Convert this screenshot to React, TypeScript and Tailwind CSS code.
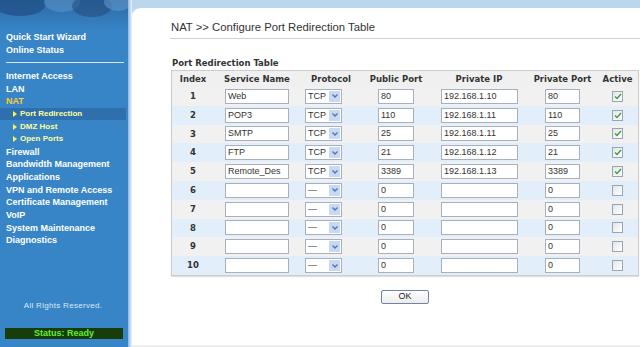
import React from "react";

type Row = { i: number; name: string; proto: string; pub: string; ip: string; priv: string; active: boolean };

const rows: Row[] = [
  { i: 1, name: "Web", proto: "TCP", pub: "80", ip: "192.168.1.10", priv: "80", active: true },
  { i: 2, name: "POP3", proto: "TCP", pub: "110", ip: "192.168.1.11", priv: "110", active: true },
  { i: 3, name: "SMTP", proto: "TCP", pub: "25", ip: "192.168.1.11", priv: "25", active: true },
  { i: 4, name: "FTP", proto: "TCP", pub: "21", ip: "192.168.1.12", priv: "21", active: true },
  { i: 5, name: "Remote_Des", proto: "TCP", pub: "3389", ip: "192.168.1.13", priv: "3389", active: true },
  { i: 6, name: "", proto: "—", pub: "0", ip: "", priv: "0", active: false },
  { i: 7, name: "", proto: "—", pub: "0", ip: "", priv: "0", active: false },
  { i: 8, name: "", proto: "—", pub: "0", ip: "", priv: "0", active: false },
  { i: 9, name: "", proto: "—", pub: "0", ip: "", priv: "0", active: false },
  { i: 10, name: "", proto: "—", pub: "0", ip: "", priv: "0", active: false },
];

const menu: { label: string; kind: "main" | "nat" | "sub" | "subActive" }[] = [
  { label: "Internet Access", kind: "main" },
  { label: "LAN", kind: "main" },
  { label: "NAT", kind: "nat" },
  { label: "Port Redirection", kind: "subActive" },
  { label: "DMZ Host", kind: "sub" },
  { label: "Open Ports", kind: "sub" },
  { label: "Firewall", kind: "main" },
  { label: "Bandwidth Management", kind: "main" },
  { label: "Applications", kind: "main" },
  { label: "VPN and Remote Access", kind: "main" },
  { label: "Certificate Management", kind: "main" },
  { label: "VoIP", kind: "main" },
  { label: "System Maintenance", kind: "main" },
  { label: "Diagnostics", kind: "main" },
];

function Field({ value, w }: { value: string; w: string }) {
  return (
    <div
      className={`${w} h-[15px] border border-[#a7b0bf] bg-white flex items-center pl-[2px] text-[9px] text-[#333] font-['Liberation_Sans',sans-serif] leading-none overflow-hidden whitespace-nowrap`}
    >
      {value}
    </div>
  );
}

function Select({ value }: { value: string }) {
  return (
    <div className="w-[37px] h-[15px] border border-[#a7b0bf] bg-white flex items-center text-[9px] text-[#333] font-['Liberation_Sans',sans-serif] leading-none">
      <span className="flex-1 pl-[2px]">{value}</span>
      <span className="w-[11px] h-[11px] mr-[1px] bg-[#c8d9f4] flex items-center justify-center">
        <svg width="6" height="4" viewBox="0 0 6 4">
          <path d="M0.5 0.5 L3 3 L5.5 0.5" stroke="#4d73bd" strokeWidth="1.3" fill="none" />
        </svg>
      </span>
    </div>
  );
}

function Check({ on }: { on: boolean }) {
  return (
    <div className="w-[11px] h-[11px] border border-[#98a4b2] bg-gradient-to-br from-[#e2e6ea] to-white flex items-center justify-center">
      {on && (
        <svg width="8" height="7" viewBox="0 0 8 7">
          <path d="M1 3.5 L3 5.5 L7 1" stroke="#3a9e3a" strokeWidth="1.4" fill="none" />
        </svg>
      )}
    </div>
  );
}

const cols = "grid grid-cols-[42px_86px_62px_68px_98px_69px_41px]";

export default function App() {
  return (
    <div className="w-[640px] h-[347px] flex overflow-hidden bg-white font-['Liberation_Sans',sans-serif]">
      {/* Sidebar */}
      <div className="w-[128px] h-full bg-[#3785c6] flex flex-col relative shrink-0">
        <div className="h-[31px] relative overflow-hidden bg-gradient-to-b from-[#2d6aa6] to-[#3785c6]">
          <svg className="absolute inset-0" width="128" height="31" viewBox="0 0 128 31">
            <ellipse cx="20" cy="4" rx="26" ry="12" fill="#1f4f86" opacity="0.7" />
            <ellipse cx="62" cy="2" rx="18" ry="10" fill="#5a93c8" opacity="0.6" />
            <ellipse cx="92" cy="6" rx="20" ry="11" fill="#234f80" opacity="0.6" />
            <ellipse cx="118" cy="2" rx="14" ry="9" fill="#6aa0d2" opacity="0.5" />
          </svg>
        </div>
        <div className="pl-[6px] text-[9px] font-bold text-white leading-[12.67px]">
          <div>Quick Start Wizard</div>
          <div>Online Status</div>
        </div>
        <div className="mx-[6px] mt-[6px] mb-[6.5px] h-px bg-[#d6e6f5] w-[118px]" />
        <div className="flex flex-col">
          {menu.map((m) => {
            if (m.kind === "main")
              return (
                <div key={m.label} className="pl-[6px] h-[12.67px] leading-[12.67px] text-[9px] font-bold text-white whitespace-nowrap">
                  {m.label}
                </div>
              );
            if (m.kind === "nat")
              return (
                <div key={m.label} className="pl-[6px] h-[12.67px] leading-[12.67px] text-[9px] font-bold text-[#ffcc33]">
                  {m.label}
                </div>
              );
            return (
              <div
                key={m.label}
                className={`pl-[13px] h-[12.67px] flex items-center gap-[3px] text-[8px] font-bold text-[#ffff99] w-[126px] ${
                  m.kind === "subActive" ? "bg-[#2f6fad]" : ""
                }`}
              >
                <svg width="4" height="6" viewBox="0 0 4 6">
                  <path d="M0 0 L4 3 L0 6 Z" fill="#ffee55" />
                </svg>
                <span>{m.label}</span>
              </div>
            );
          })}
        </div>
        <div className="mt-auto text-center text-[8px] text-[#dde8f4] tracking-[0.3px] pr-[2px]">All Rights Reserved.</div>
        <div className="mt-[16px] mb-[8px] mx-[5px] h-[11px] bg-[#173d0c] flex items-center justify-center text-[9px] font-bold text-[#66ee33]">
          Status: Ready
        </div>
        <div className="absolute right-[-4px] top-0 bottom-0 w-[4px] bg-gradient-to-r from-[#8fb6de] to-[#eef4fb]" />
      </div>

      {/* Main */}
      <div className="flex-1 flex flex-col bg-gradient-to-b from-[#bcd6ee] to-[#d9e8f6]">
        <div className="h-[8px] shrink-0" />
        <div className="flex-1 bg-white rounded-tl-[10px] ml-[3px] flex flex-col">
          <div className="pl-[40px] pt-[12px] h-[30px] text-[11.3px] text-[#333] leading-[14px]">
            NAT &gt;&gt; Configure Port Redirection Table
          </div>
          <div className="ml-[39px] h-px bg-[#cfd3d8]" />
          <div className="ml-[41px] mt-[18px] h-[13px] text-[8.5px] font-bold text-[#333] font-['DejaVu_Sans',sans-serif] leading-[13px]">
            Port Redirection Table
          </div>
          <div className="ml-[40px] w-[468px] border border-[#cdcdcd] bg-[#f0f0f0] shadow-[0_1px_1px_rgba(0,0,0,0.12)]">
            <div className={`${cols} h-[16px] items-center text-[8.5px] font-bold text-[#333] font-['DejaVu_Sans',sans-serif] text-center`}>
              <div>Index</div>
              <div>Service Name</div>
              <div>Protocol</div>
              <div>Public Port</div>
              <div>Private IP</div>
              <div>Private Port</div>
              <div>Active</div>
            </div>
            {rows.map((r) => (
              <div
                key={r.i}
                className={`${cols} h-[18.8px] items-center ${r.i % 2 === 0 ? "bg-[#e3eefb]" : "bg-[#f1f1f1]"}`}
              >
                <div className="text-center text-[8.5px] font-bold text-[#333] font-['DejaVu_Sans',sans-serif]">{r.i}</div>
                <div className="pl-[11px]">
                  <Field value={r.name} w="w-[64px]" />
                </div>
                <div className="pl-[5px]">
                  <Select value={r.proto} />
                </div>
                <div className="pl-[16px]">
                  <Field value={r.pub} w="w-[36px]" />
                </div>
                <div className="pl-[11px]">
                  <Field value={r.ip} w="w-[77px]" />
                </div>
                <div className="pl-[17px]">
                  <Field value={r.priv} w="w-[35px]" />
                </div>
                <div className="flex justify-center">
                  <Check on={r.active} />
                </div>
              </div>
            ))}
          </div>
          <div className="mt-[14px] flex ml-[250px]">
            <div className="w-[48px] h-[14px] border border-[#7383a6] rounded-[2px] bg-gradient-to-b from-white to-[#ececec] flex items-center justify-center text-[9px] text-[#222]">
              OK
            </div>
          </div>
          <div className="mt-auto h-[2px] bg-[#efefef]" />
        </div>
      </div>
    </div>
  );
}
